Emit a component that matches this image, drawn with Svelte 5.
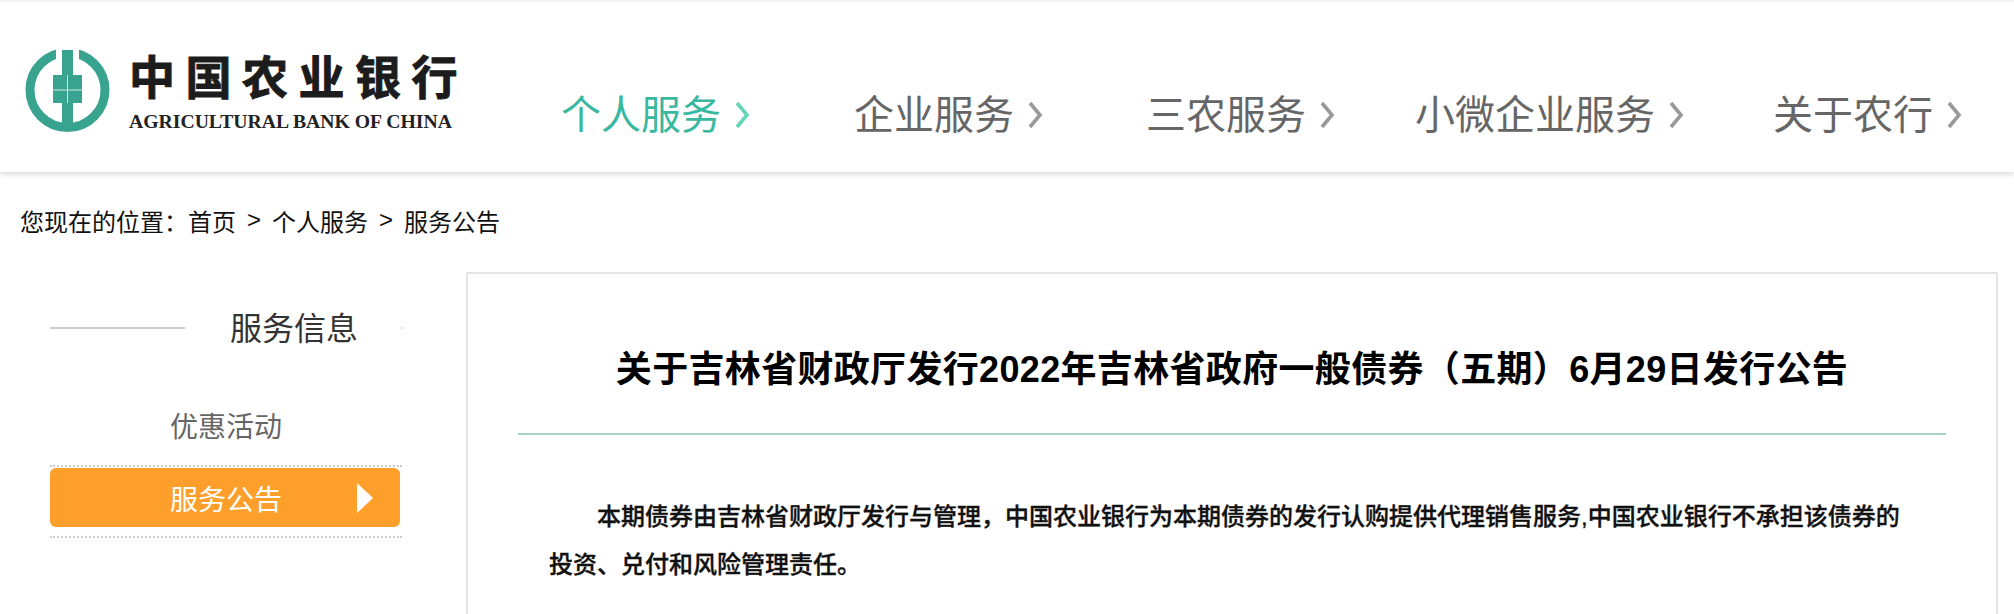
<script>
  const navItems = [
    { label: '个人服务', active: true },
    { label: '企业服务' },
    { label: '三农服务' },
    { label: '小微企业服务' },
    { label: '关于农行' }
  ];
  const crumbs = ['首页', '个人服务', '服务公告'];
</script>

<div class="page">
  <header class="header">
    <a class="logo" href="#top">
      <svg class="mark" viewBox="0 0 88 84" width="88" height="84" aria-hidden="true">
        <circle cx="43.5" cy="42" r="37.5" fill="none" stroke="#38a48f" stroke-width="9" />
        <rect x="32" y="0" width="23" height="30" fill="#fff" />
        <rect x="38" y="2" width="11" height="28" fill="#38a48f" />
        <rect x="29" y="27" width="29" height="28" fill="#38a48f" />
        <rect x="38" y="55" width="11" height="28" fill="#38a48f" />
        <path d="M29 42h29M43.5 27v28" stroke="#cfe8e2" stroke-width="1" fill="none" />
      </svg>
      <span class="logo-text">
        <span class="logo-cn">中国农业银行</span>
        <span class="logo-en">AGRICULTURAL BANK OF CHINA</span>
      </span>
    </a>
    <nav class="nav">
      {#each navItems as item}
        <a class="nav-item" class:active={item.active} href="#top">
          {item.label}
          <svg class="chevron" viewBox="0 0 16 28" width="16" height="28" aria-hidden="true">
            <path d="M3 2l10 12L3 26" fill="none" stroke="currentColor" stroke-width="3.6" />
          </svg>
        </a>
      {/each}
    </nav>
  </header>

  <div class="breadcrumb">
    <span class="here">您现在的位置&#xFF1A;</span>
    {#each crumbs as crumb, i}
      {#if i > 0}<span class="sep">&gt;</span>{/if}
      <a href="#top">{crumb}</a>
    {/each}
  </div>

  <div class="body">
    <aside class="sidebar">
      <h2 class="side-title"><span>服务信息</span></h2>
      <a class="side-item" href="#top">优惠活动</a>
      <div class="side-active">
        <a class="side-button" href="#top">
          服务公告
          <svg viewBox="0 0 16 30" width="16" height="30" aria-hidden="true">
            <path d="M0 0l16 15L0 30z" fill="#fff" />
          </svg>
        </a>
      </div>
    </aside>

    <main class="content">
      <h1>关于吉林省财政厅发行2022年吉林省政府一般债券&#xFF08;五期&#xFF09;6月29日发行公告</h1>
      <hr />
      <p>本期债券由吉林省财政厅发行与管理&#xFF0C;中国农业银行为本期债券的发行认购提供代理销售服务,中国农业银行不承担该债券的投资、兑付和风险管理责任。</p>
    </main>
  </div>
</div>

<style>
  :global(body) {
    margin: 0;
    background: #fff;
    font-family: "Liberation Sans", "Noto Sans CJK SC", sans-serif;
  }

  a {
    color: inherit;
    text-decoration: none;
  }

  .page {
    min-height: 100vh;
    display: flex;
    flex-direction: column;
  }

  .header {
    height: 170px;
    border-top: 2px solid #f3f3f3;
    display: flex;
    background: #fff;
    box-shadow: 0 2px 6px rgb(0 0 0 / 16%);
  }

  .logo {
    width: 561px;
    flex: none;
    padding: 46px 0 0 24px;
    box-sizing: border-box;
    display: flex;
    align-items: flex-start;
    gap: 17px;
  }

  .mark {
    flex: none;
  }

  .logo-text {
    display: flex;
    flex-direction: column;
  }

  .logo-cn {
    font-family: "Noto Sans CJK SC", sans-serif;
    font-weight: 700;
    font-size: 46px;
    line-height: 54px;
    letter-spacing: 10.5px;
    margin-top: -1px;
    color: #1c1c1c;
    -webkit-text-stroke: 1px #1c1c1c;
  }

  .logo-en {
    font-family: "Liberation Serif", serif;
    font-weight: 700;
    font-size: 19.7px;
    line-height: 24px;
    margin-top: 8px;
    color: #222;
    white-space: nowrap;
  }

  .nav {
    flex: 1;
    display: grid;
    grid-template-columns: 293px 292px 269px 358px 1fr;
    padding-top: 87px;
    font-size: 40px;
    line-height: 52px;
    color: #666;
  }

  .nav-item {
    display: flex;
    align-items: center;
    gap: 13px;
    height: 52px;
  }

  .nav-item.active {
    color: #38b8a0;
  }

  .chevron {
    color: #999;
  }

  .active .chevron {
    color: #66d6ba;
  }

  .breadcrumb {
    height: 100px;
    box-sizing: border-box;
    padding: 0 0 4px 20px;
    display: flex;
    align-items: center;
    gap: 11px;
    font-size: 24px;
    color: #111;
  }

  .here {
    margin-right: -11px;
  }

  .body {
    flex: 1;
    display: flex;
    padding: 0 16px 0 50px;
  }

  .sidebar {
    flex: none;
    width: 352px;
    margin-right: 64px;
  }

  .side-title {
    height: 112px;
    margin: 0;
    display: flex;
    align-items: center;
    font-size: 32px;
    font-weight: 400;
    color: #333;
    background: linear-gradient(#ccc, #ccc) center / 100% 2px no-repeat;
  }

  .side-title span {
    width: 216px;
    margin-left: 135px;
    padding: 0 0 4px 45px;
    box-sizing: border-box;
    background: #fff;
  }

  .side-item {
    display: flex;
    align-items: center;
    height: 81px;
    padding-left: 120px;
    box-sizing: border-box;
    font-size: 28px;
    color: #666;
  }

  .side-active {
    border-top: 2px dotted #ccc;
    border-bottom: 2px dotted #ccc;
    padding: 1px 0 9px;
  }

  .side-button {
    width: 350px;
    height: 59px;
    box-sizing: border-box;
    padding: 0 27px 0 120px;
    display: flex;
    align-items: center;
    justify-content: space-between;
    border-radius: 6px;
    background: #fd9f2a;
    font-size: 28px;
    color: #fff;
  }

  .content {
    flex: 1;
    border: 2px solid #e5e5e5;
    border-bottom: 0;
    min-width: 0;
  }

  h1 {
    margin: 0;
    padding: 66px 0 33px;
    text-align: center;
    font-size: 36px;
    line-height: 60px;
    letter-spacing: 0.33px;
    font-weight: 700;
    color: #000;
  }

  hr {
    height: 2px;
    margin: 0 50px;
    border: 0;
    background: #a6d5c6;
  }

  p {
    margin: 58px 87px 0 81px;
    text-indent: 48px;
    font-size: 24px;
    line-height: 48px;
    font-weight: 500;
    color: #111;
    -webkit-text-stroke: 0.35px #111;
  }
</style>
